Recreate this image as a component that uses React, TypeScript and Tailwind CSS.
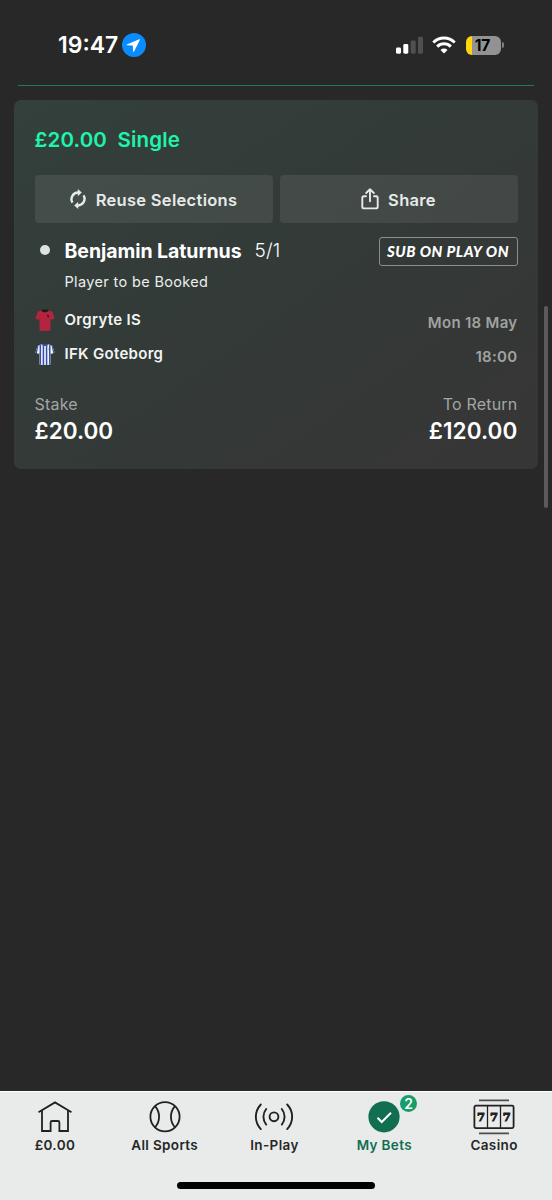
import type { ReactNode } from 'react';

function StatusBar() {
  return (
    <header className="flex h-[85px] items-start justify-between pt-[33px] pr-[48px] pl-[58px]">
      <div className="flex h-6 items-center gap-[4px]">
        <span className="w-[60px] text-[23px] font-semibold whitespace-nowrap text-white">19:47</span>
        <svg width="24" height="24" viewBox="0 0 24 24">
          <circle cx="12" cy="12" r="12" fill="#0a8cff" />
          <path d="M17.2 6.2 4.9 11.4c-.5.3-.4.9.1.9l5.8.3.3 5.9c.1.5.7.6 1 .1l5.8-11.8c.2-.5-.2-.8-.7-.6Z" fill="#fff" />
        </svg>
      </div>

      <div className="flex h-6 items-center">
        <svg width="28" height="18" viewBox="0 0 28 18">
          <rect x="0" y="11.5" width="5" height="6.2" rx="1.4" fill="#fff" />
          <rect x="7.3" y="8" width="5" height="9.7" rx="1.4" fill="#fff" />
          <rect x="14.7" y="4.5" width="5" height="13.2" rx="1.4" fill="#505050" />
          <rect x="22" y="0.8" width="5" height="16.9" rx="1.4" fill="#505050" />
        </svg>
        <svg className="ml-[8px]" width="24" height="18" viewBox="0 0 24 18" fill="none" stroke="#fff" strokeWidth="3">
          <path d="M1.3 6.5a15.2 15.2 0 0 1 21.4 0" />
          <path d="M5.2 10.6a9.6 9.6 0 0 1 13.6 0" />
          <path d="M12 17.4 8.5 13.9a5 5 0 0 1 7 0Z" fill="#fff" stroke="none" />
        </svg>
        <div className="ml-[10px] flex h-[19px] w-[35px] items-center justify-center overflow-hidden rounded-[6px] bg-[linear-gradient(90deg,#ffd60a_6.5px,#929292_6.5px)]">
          <span className="pt-[1px] pr-[2px] text-[15.5px] leading-none font-bold text-black">17</span>
        </div>
        <span className="ml-[1px] h-[6px] w-[2px] rounded-r-full bg-[#808080]" />
      </div>
    </header>
  );
}

function ReuseIcon() {
  return (
    <svg width="16" height="20" viewBox="0 0 16 20" fill="none" stroke="#e8eae9" strokeWidth="2.4">
      <path d="M2.5 13.7A6.6 6.6 0 0 1 8.6 3.6" />
      <path d="M13.5 6.3A6.6 6.6 0 0 1 7.4 16.4" />
      <path d="M7.8 0v7.2L11.8 3.600Z" fill="#e8eae9" stroke="none" />
      <path d="M8.2 20v-7.2L4.2 16.400Z" fill="#e8eae9" stroke="none" />
    </svg>
  );
}

function ShareIcon() {
  return (
    <svg width="18" height="22" viewBox="0 0 18 22" fill="none" stroke="#e8eae9" strokeWidth="1.9" strokeLinecap="round" strokeLinejoin="round">
      <path d="M5 8.2H2.8A1.5 1.5 0 0 0 1.3 9.7v9a1.7 1.7 0 0 0 1.7 1.7h12a1.7 1.7 0 0 0 1.7-1.7v-9a1.5 1.5 0 0 0-1.5-1.5H13" />
      <path d="M9 13.2V1.6M5.2 5 9 1.3 12.8 5" />
    </svg>
  );
}

const SHIRT = 'M6.2 1.2 2.6 3 .4 9.4l3.4 1.5.8-1.6v12.2c3.6.9 7.4.9 11 0V9.3l.8 1.6 3.4-1.5L17.6 3 14 1.2c-2.4 1-5.4 1-7.8 0Z';

function RedShirt() {
  return (
    <svg width="20" height="23" viewBox="0 0 20.2 23">
      <path d={SHIRT} fill="#b5243f" />
      <path d="M6.4 1.1 7.6.5h5l1.2.6c-1 2.8-6.4 2.8-7.4 0Z" fill="#1d1a1c" />
      <path d="m12 6 1.4-.4.8 1.3-.9 2.1Z" fill="#1d1a1c" />
    </svg>
  );
}

function StripedShirt() {
  return (
    <svg width="20" height="23" viewBox="0 0 20.2 23">
      <clipPath id="shirt">
        <path d={SHIRT} />
      </clipPath>
      <g clipPath="url(#shirt)">
        <path d="M0 0h21v23H0z" fill="#eef1fa" />
        <path d="M5.4 0v23M8.5 0v23M11.7 0v23M14.9 0v23M2.9 2 .9 11M17.4 2l2 9" stroke="#3450a8" strokeWidth="1.5" />
      </g>
      <path d="M6.6 1.1c1.6 1.8 5.4 1.8 7 0" fill="none" stroke="#3450a8" strokeWidth="1" />
      <path d="m12.4 5 1.8.2-.4 2.4-1-.3Z" fill="#e6cf6a" />
    </svg>
  );
}

function ActionButton({ children }: { children: ReactNode }) {
  return (
    <button className="flex h-[48px] flex-1 items-center justify-center rounded-[4px] bg-white/8 text-[16.5px] font-semibold whitespace-nowrap text-[#e8eae9]">
      {children}
    </button>
  );
}

function BetCard() {
  return (
    <section className="mx-[14px] mt-[14px] h-[369px] rounded-[7px] bg-[linear-gradient(145deg,#33403b_0%,#333a38_50%,#353736_78%,#373636_100%)] px-[20.5px] text-white">
      <h2 className="flex h-[75px] items-center gap-[12px] pt-[6px] text-[20.5px] font-semibold tracking-[0.15px] whitespace-nowrap text-[#1df5ab]">
        <span className="w-[71px]">£20.00</span>
        <span>Single</span>
      </h2>

      <div className="flex gap-[7px]">
        <ActionButton>
          <ReuseIcon />
          <span className="mt-[2px] ml-[10px] tracking-[0.3px]">Reuse Selections</span>
        </ActionButton>
        <ActionButton>
          <ShareIcon />
          <span className="mt-[2px] ml-[9px] tracking-[0.3px]">Share</span>
        </ActionButton>
      </div>

      <div className="mt-[14px] flex h-[29px] items-center">
        <span className="mb-[3px] ml-[5px] size-[10px] rounded-full bg-[#dfe2e0]" />
        <span className="ml-[15px] w-[177px] text-[19.5px] font-bold tracking-[-0.06px] whitespace-nowrap">Benjamin Laturnus</span>
        <span className="ml-[13px] text-[19px] font-light tracking-[0.2px] whitespace-nowrap">5/1</span>
        <span className="ml-auto flex h-[29px] w-[139px] items-center justify-center rounded-[3px] border-[1.5px] border-[#8b8e8d] font-['Lato',sans-serif] text-[15px] font-black tracking-[0.5px] whitespace-nowrap italic">
          SUB ON PLAY ON
        </span>
      </div>
      <p className="ml-[30px] h-[31px] text-[14.5px] leading-[31px] tracking-[0.35px] text-[#eceeed]">Player to be Booked</p>

      <div className="mt-[6px] flex justify-between text-[15px] tracking-[0.3px]">
        <div className="font-semibold text-[#f2f4f3]">
          <div className="flex h-[34px] items-center gap-[10px]">
            <RedShirt />
            <span>Orgryte IS</span>
          </div>
          <div className="flex h-[34px] items-center gap-[10px]">
            <StripedShirt />
            <span>IFK Goteborg</span>
          </div>
        </div>
        <div className="pt-[3px] text-right font-semibold text-[#9fa2a1]">
          <p className="leading-[34px]">Mon 18 May</p>
          <p className="leading-[34px]">18:00</p>
        </div>
      </div>

      <div className="mt-[18px] flex justify-between">
        <div>
          <p className="text-[16px] leading-[24px] tracking-[0.2px] text-[#a3a6a5]">Stake</p>
          <p className="text-[22.5px] leading-[29px] font-semibold">£20.00</p>
        </div>
        <div className="text-right">
          <p className="text-[16px] leading-[24px] tracking-[0.2px] text-[#a3a6a5]">To Return</p>
          <p className="text-[22.5px] leading-[29px] font-semibold tracking-[0.1px]">£120.00</p>
        </div>
      </div>
    </section>
  );
}

function HomeIcon() {
  return (
    <svg width="36" height="36" viewBox="0 0 36 36" fill="none" stroke="#1f2221" strokeWidth="1.8">
      <path d="M1.5 13.2 18 3.4l16.5 9.8" />
      <path d="M5 11.5V32h8.6v-8.5a1.5 1.5 0 0 1 1.5-1.500h5.800a1.500 1.500 0 0 1 1.500 1.500V32H31V11.500" />
    </svg>
  );
}

function BallIcon() {
  return (
    <svg width="36" height="36" viewBox="0 0 36 36" fill="none" stroke="#1f2221" strokeWidth="1.8">
      <circle cx="18" cy="17.8" r="14.6" />
      <path d="M8 7.2c5.4 6 5.4 15.2 0 21.2M28 7.2c-5.4 6-5.4 15.2 0 21.2" />
    </svg>
  );
}

function InPlayIcon() {
  return (
    <svg width="42" height="36" viewBox="0 0 42 36" fill="none" stroke="#1f2221" strokeWidth="1.9" strokeLinecap="round">
      <circle cx="21" cy="17.8" r="4.4" />
      <path d="M13.2 10c-3.7 4.6-3.7 11 0 15.6M28.8 10c3.7 4.6 3.7 11 0 15.6" />
      <path d="M7.8 5.5c-6.6 7.2-6.6 17.4 0 24.6M34.2 5.5c6.6 7.2 6.6 17.4 0 24.6" />
    </svg>
  );
}

function MyBetsIcon() {
  return (
    <div className="relative h-9 w-9">
      <svg width="36" height="36" viewBox="0 0 36 36">
        <circle cx="18" cy="17.8" r="15.6" fill="#126e51" />
        <path d="m11.5 18.8 4.2 4.2 9.3-9.3" fill="none" stroke="#fff" strokeWidth="2" />
      </svg>
      <span className="absolute -top-[4px] left-[34px] flex size-[17px] items-center justify-center rounded-full bg-[#179c6b] text-[14px] leading-none text-white">
        2
      </span>
    </div>
  );
}

function CasinoIcon() {
  return (
    <svg width="42" height="36" viewBox="0 0 42 36" fill="none" stroke="#1f2221" strokeWidth="1.8">
      <path d="M6 1.3h30M6 34.3h30" stroke="#4b4e4d" />
      <rect x="1.4" y="6.7" width="39.2" height="22.4" rx="1.5" />
      <path d="M14.5 6.7v22.4M27.5 6.7v22.4" strokeWidth="1.3" />
      <g fill="#1f2221" stroke="#1f2221" strokeWidth="0.9" fontFamily="DejaVu Serif, serif" fontSize="11.5" fontWeight="700" textAnchor="middle">
        <text x="8.3" y="22.2">7</text>
        <text x="21.1" y="22.2">7</text>
        <text x="33.9" y="22.2">7</text>
      </g>
    </svg>
  );
}

const tabs = [
  { label: '£0.00', icon: <HomeIcon /> },
  { label: 'All Sports', icon: <BallIcon /> },
  { label: 'In-Play', icon: <InPlayIcon /> },
  { label: 'My Bets', icon: <MyBetsIcon />, active: true },
  { label: 'Casino', icon: <CasinoIcon /> },
];

function TabBar() {
  return (
    <footer className="flex h-[109px] flex-col border-t border-white bg-[#e9ebea]">
      <nav className="grid w-[549px] grid-cols-5 pt-[7px]">
        {tabs.map((tab) => (
          <a
            key={tab.label}
            className={`flex flex-col items-center text-[13.5px] leading-[20px] font-semibold tracking-[0.35px] ${tab.active ? 'text-[#126e51]' : 'text-[#242726]'}`}
          >
            {tab.icon}
            <span>{tab.label}</span>
          </a>
        ))}
      </nav>
      <div className="mx-auto mt-auto mb-[11px] h-[7px] w-[198px] rounded-full bg-black" />
    </footer>
  );
}

export default function App() {
  return (
    <div className="relative flex h-[1200px] w-[552px] flex-col overflow-hidden bg-[#282828] font-['Inter',sans-serif]">
      <StatusBar />
      <div className="mr-[18px] ml-[18px] h-px shrink-0 bg-[#1f7a59]" />
      <main className="flex-1">
        <BetCard />
      </main>
      <TabBar />
      {/* Scroll indicator */}
      <div className="absolute top-[306px] right-[4px] h-[202px] w-[4px] rounded-full bg-[#5b5b5b]" />
    </div>
  );
}
